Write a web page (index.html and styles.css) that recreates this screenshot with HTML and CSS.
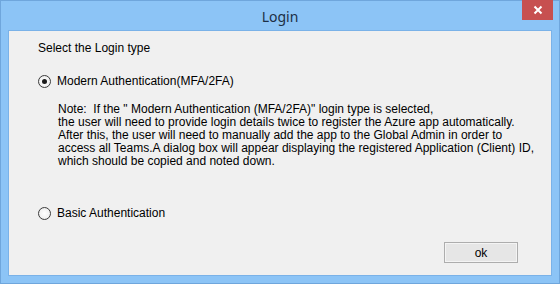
FILE: index.html
```html
<!DOCTYPE html>
<html>
<head>
<meta charset="utf-8">
<link rel="stylesheet" href="styles.css">
</head>
<body>
<div class="window">
  <div class="titlebar">
    <span class="title">Login</span>
    <div class="close">
      <svg width="10" height="10" viewBox="0 0 10 10"><path d="M1.5 1.5 L8.5 8.5 M8.5 1.5 L1.5 8.5" stroke="#fff" stroke-width="2" fill="none"/></svg>
    </div>
  </div>
  <div class="client">
    <div class="heading">Select the Login type</div>
    <div class="radio-row first">
      <span class="radio checked"></span>
      <span class="label">Modern Authentication(MFA/2FA)</span>
    </div>
    <p class="note">Note:&nbsp; If the " Modern Authentication (MFA/2FA)" login type is selected,<br>the user will need to provide login details twice to register the Azure app automatically.<br>After this, the user will need to manually add the app to the Global Admin in order to<br>access all Teams.A dialog box will appear displaying the registered Application (Client) ID,<br>which should be copied and noted down.</p>
    <div class="radio-row second">
      <span class="radio"></span>
      <span class="label">Basic Authentication</span>
    </div>
    <div class="actions">
      <div class="ok">ok</div>
    </div>
  </div>
</div>
</body>
</html>
```

FILE: styles.css
```css
html, body {
  margin: 0;
  padding: 0;
}
body {
  width: 560px;
  height: 284px;
  overflow: hidden;
}
.window {
  box-sizing: border-box;
  width: 560px;
  height: 284px;
  border: 1px solid #6fa6dc;
  background: #8cc4f6;
  padding: 0 7px 7px 7px;
  display: flex;
  flex-direction: column;
}
.titlebar {
  position: relative;
  height: 29px;
  display: flex;
  align-items: center;
  justify-content: center;
  flex: none;
}
.title {
  font-family: "Segoe UI", "Noto Sans", sans-serif;
  font-size: 14px;
  line-height: 29px;
  color: #1c2f45;
  padding-top: 1px;
}
.close {
  position: absolute;
  top: -1px;
  right: -1px;
  width: 31px;
  height: 20px;
  background: #c75050;
  display: flex;
  align-items: center;
  justify-content: center;
}
.close svg {
  display: block;
}
.client {
  flex: 1;
  min-height: 0;
  box-sizing: border-box;
  border: 1px solid #7ab2e8;
  background: #f0f0f0;
  padding: 10px 33px 12px 29px;
  display: flex;
  flex-direction: column;
  font-family: "Liberation Sans", Arial, sans-serif;
  font-size: 12px;
  color: #000;
}
.heading {
  line-height: 14px;
  height: 14px;
}
.radio-row {
  display: flex;
  align-items: center;
  height: 13px;
  line-height: 13px;
  white-space: nowrap;
}
.radio-row.first {
  margin-top: 20px;
}
.radio-row.second {
  margin-top: 39px;
}
.radio {
  box-sizing: border-box;
  width: 13px;
  height: 13px;
  border-radius: 50%;
  border: 1px solid #3c3c3c;
  background: radial-gradient(circle at 50% 50%, #ffffff 0%, #f2f2f2 60%, #dcdcdc 100%);
  margin-right: 6px;
  display: flex;
  align-items: center;
  justify-content: center;
  flex: none;
}
.radio.checked::after {
  content: "";
  width: 5px;
  height: 5px;
  border-radius: 50%;
  background: #1a1a1a;
}
.note {
  margin: 15px 0 0 20px;
  line-height: 13px;
  white-space: nowrap;
}
.actions {
  margin-top: auto;
  display: flex;
  justify-content: flex-end;
}
.ok {
  box-sizing: border-box;
  width: 74px;
  height: 21px;
  border: 1px solid #adadad;
  background: #e6e6e6;
  box-shadow: inset 0 0 0 1px #f4f4f4;
  display: flex;
  align-items: center;
  justify-content: center;
  line-height: 14px;
}
```
